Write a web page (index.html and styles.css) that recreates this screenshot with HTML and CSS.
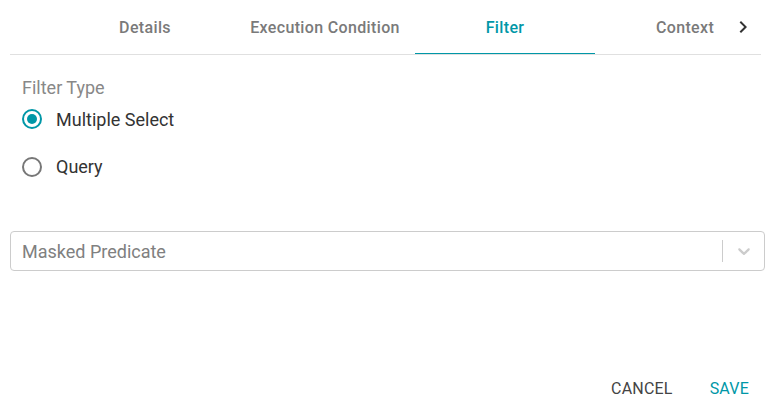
FILE: index.html
```html
<!DOCTYPE html>
<html>
<head>
<meta charset="utf-8">
<link rel="stylesheet" href="styles.css">
</head>
<body>
<div class="tabs">
  <div class="scroll-left"></div>
  <div class="viewport">
    <div class="tab">Details</div>
    <div class="tab">Execution Condition</div>
    <div class="tab selected">Filter</div>
    <div class="tab">Context</div>
  </div>
  <div class="scroll-right">
    <svg width="24" height="24" viewBox="0 0 24 24"><path d="M10 6 8.59 7.41 13.17 12l-4.58 4.59L10 18l6-6z" fill="#333"/></svg>
  </div>
</div>
<div class="content">
  <div class="field-label">Filter Type</div>
  <div class="radio-group">
    <label class="radio-row"><span class="radio checked"></span><span class="radio-text">Multiple Select</span></label>
    <label class="radio-row"><span class="radio"></span><span class="radio-text">Query</span></label>
  </div>
  <div class="select">
    <span class="placeholder">Masked Predicate</span>
    <span class="sep"></span>
    <svg class="chev" width="20" height="20" viewBox="0 0 20 20"><path d="M4.516 7.548c0.436-0.446 1.043-0.481 1.576 0l3.908 3.747 3.908-3.747c0.533-0.481 1.141-0.446 1.574 0 0.436 0.445 0.408 1.197 0 1.615-0.406 0.418-4.695 4.502-4.695 4.502-0.217 0.223-0.502 0.335-0.787 0.335s-0.570-0.112-0.789-0.335c0 0-4.287-4.084-4.695-4.502s-0.436-1.170 0-1.615z" fill="#ccc"/></svg>
  </div>
</div>
<div class="footer">
  <button class="btn cancel">Cancel</button>
  <button class="btn save">Save</button>
</div>
</body>
</html>
```

FILE: styles.css
```css
body {
  margin: 0;
  font-family: Roboto, "Liberation Sans", sans-serif;
  background: #fff;
  width: 771px;
  height: 404px;
  overflow: hidden;
}
.tabs {
  margin: 0 10px;
  height: 54px;
  display: flex;
  border-bottom: 1px solid #e0e0e0;
}
.scroll-left {
  flex: 0 0 45px;
}
.viewport {
  flex: 1;
  display: flex;
  overflow: hidden;
}
.tab {
  flex: 0 0 180px;
  display: flex;
  align-items: center;
  justify-content: center;
  font-size: 16px;
  font-weight: 500;
  letter-spacing: 0.35px;
  color: #7a7a7a;
  position: relative;
}
.tab.selected {
  color: #0097a7;
}
.tab.selected::after {
  content: "";
  position: absolute;
  left: 0;
  right: 0;
  bottom: -1px;
  height: 2px;
  background: #0097a7;
}
.scroll-right {
  flex: 0 0 40px;
  display: flex;
  align-items: center;
  justify-content: center;
  padding-left: 3px;
  box-sizing: border-box;
}
.content {
  padding: 21px 6px 0 10px;
}
.field-label {
  padding-left: 12px;
  font-size: 18px;
  line-height: 24px;
  color: #888;
}
.radio-group {
  display: flex;
  flex-direction: column;
}
.radio-row {
  display: flex;
  align-items: center;
  height: 49px;
  padding-left: 12px;
}
.radio-row:first-child {
  height: 46px;
  margin-top: -4px;
}
.radio {
  width: 20px;
  height: 20px;
  box-sizing: border-box;
  border: 2px solid #777;
  border-radius: 50%;
  position: relative;
}
.radio.checked {
  border-color: #0097a7;
}
.radio.checked::after {
  content: "";
  position: absolute;
  left: 3px;
  top: 3px;
  width: 10px;
  height: 10px;
  border-radius: 50%;
  background: #0097a7;
}
.radio-text {
  margin-left: 14px;
  font-size: 18px;
  color: #333;
}
.select {
  margin-top: 40px;
  height: 40px;
  box-sizing: border-box;
  border: 1px solid #ccc;
  border-radius: 4px;
  display: flex;
  align-items: center;
  padding: 0 10px 0 11px;
}
.placeholder {
  flex: 1;
  font-size: 18px;
  color: #808080;
}
.sep {
  width: 1px;
  height: 22px;
  background: #ccc;
  margin-right: 11px;
}
.chev {
  display: block;
}
.footer {
  display: flex;
  justify-content: flex-end;
  margin-top: 99px;
  padding-right: 18px;
  gap: 29px;
}
.btn {
  background: none;
  border: none;
  font-family: inherit;
  font-size: 16px;
  text-transform: uppercase;
  letter-spacing: 0.2px;
  padding: 0 4px;
  height: 36px;
  cursor: pointer;
}
.cancel {
  color: #444;
}
.save {
  color: #0097a7;
}
```
